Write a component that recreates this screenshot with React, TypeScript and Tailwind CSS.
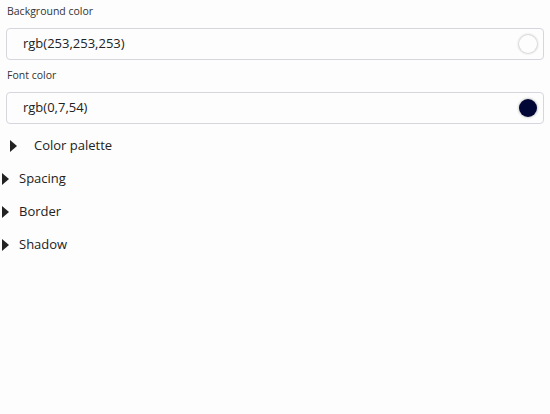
import type { ReactNode } from "react";

function ColorField({ label, value, swatch }: { label: string; value: string; swatch: string }) {
  return (
    <div className="flex flex-col">
      <label className="pl-[7px] text-[10.5px] leading-[16px] text-[#333]">{label}</label>
      <div className="mx-[6px] mt-[9px] flex h-[32px] items-center justify-between rounded-[4px] border border-[#d6d6de] bg-[#fdfdfd] pl-[16px] pr-[6px]">
        <span className="text-[13px] text-[#222]">{value}</span>
        <span
          className="size-[18px] rounded-full shadow-[0_0_2px_1px_rgba(0,0,0,0.18)]"
          style={{ backgroundColor: swatch }}
        />
      </div>
    </div>
  );
}

function Caret() {
  return (
    <svg width="7" height="12" viewBox="0 0 7 12" className="shrink-0">
      <path d="M0 0 L7 6 L0 12 Z" fill="#222" />
    </svg>
  );
}

function Section({ children, indent }: { children: ReactNode; indent?: boolean }) {
  return (
    <div className={`flex h-[33px] items-center text-[13px] text-[#222] ${indent ? "pl-[10px]" : "pl-[2px]"}`}>
      <Caret />
      <span className={indent ? "ml-[17px]" : "ml-[10px]"}>{children}</span>
    </div>
  );
}

export default function App() {
  return (
    <div
      className="h-[414px] w-[550px] bg-[#fdfdfd] pt-[3px]"
      style={{ fontFamily: '"Segoe UI", "Open Sans", sans-serif' }}
    >
      <ColorField label="Background color" value="rgb(253,253,253)" swatch="#fdfdfd" />
      <div className="mt-[7px]">
        <ColorField label="Font color" value="rgb(0,7,54)" swatch="rgb(0,7,54)" />
      </div>
      <div className="mt-[5px]">
        <Section indent>Color palette</Section>
        <Section>Spacing</Section>
        <Section>Border</Section>
        <Section>Shadow</Section>
      </div>
    </div>
  );
}
